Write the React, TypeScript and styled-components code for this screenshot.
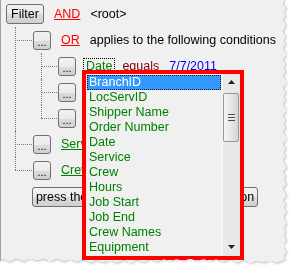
import React from 'react';
import styled, { createGlobalStyle } from 'styled-components';

const fields = [
  'BranchID',
  'LocServID',
  'Shipper Name',
  'Order Number',
  'Date',
  'Service',
  'Crew',
  'Hours',
  'Job Start',
  'Job End',
  'Crew Names',
  'Equipment',
];

// jagged "torn paper" outline of the screenshot
const tornEdge = (() => {
  const pts: string[] = ['0px 0px'];
  for (let y = 0; y <= 261; y += 4) {
    const x = 285 + Math.round(Math.sin(y * 0.9) * 1.5 + Math.sin(y * 2.7));
    pts.push(`${x}px ${y}px`);
  }
  for (let x = 284; x >= 0; x -= 4) {
    const y = 261 + Math.round(Math.sin(x * 1.1) * 1.5 + Math.sin(x * 3.1));
    pts.push(`${x}px ${y}px`);
  }
  return `polygon(${pts.join(', ')})`;
})();

const App: React.FC = () => {
  return (
    <>
      <GlobalStyle />
      <Frame>
        <Panel>
          <Row $pad={5}>
            <Btn $w={38} $h={20}>Filter</Btn>
            <Token $color="#ff0000" $link>AND</Token>
            <Token>&lt;root&gt;</Token>
          </Row>

          <Children $indent={14}>
            <Child $reach={18}>
              <Row>
                <Btn $w={18} $h={19} $dots>...</Btn>
                <Token $color="#ff0000" $link>OR</Token>
                <Token>applies to the following conditions</Token>
              </Row>

              <Children $indent={8}>
                <Child $reach={17}>
                  <Row>
                    <Btn $w={18} $h={19} $dots>...</Btn>
                    <Anchor>
                      <Token $color="#008000" $link $focus>Date</Token>
                      <ListBox>
                        <Items>
                          {fields.map((f, i) => (
                            <Item key={f} $selected={i === 0}>{f}</Item>
                          ))}
                        </Items>
                        <ScrollBar>
                          <Arrow>
                            <svg width="7" height="4" viewBox="0 0 7 4"><polygon points="3.5,0 7,4 0,4" fill="#222" /></svg>
                          </Arrow>
                          <Thumb><Grip /></Thumb>
                          <Track />
                          <Arrow>
                            <svg width="7" height="4" viewBox="0 0 7 4"><polygon points="0,0 7,0 3.5,4" fill="#222" /></svg>
                          </Arrow>
                        </ScrollBar>
                      </ListBox>
                    </Anchor>
                    <Token $color="#800000" $link>equals</Token>
                    <Token $color="#0000ff" $link>7/7/2011</Token>
                  </Row>
                </Child>
                <Child $reach={17}>
                  <Row>
                    <Btn $w={18} $h={19} $dots>...</Btn>
                  </Row>
                </Child>
                <Child $reach={17}>
                  <Row>
                    <Btn $w={18} $h={19} $dots>...</Btn>
                  </Row>
                </Child>
              </Children>
            </Child>

            <Child $reach={18}>
              <Row>
                <Btn $w={18} $h={19} $dots>...</Btn>
                <Token $color="#008000" $link>Service</Token>
              </Row>
            </Child>
            <Child $reach={18}>
              <Row>
                <Btn $w={18} $h={19} $dots>...</Btn>
                <Token $color="#008000" $link>Crew</Token>
              </Row>
            </Child>
          </Children>

          <AddButton>press the button to add a new condition</AddButton>
        </Panel>
      </Frame>
    </>
  );
};

const GlobalStyle = createGlobalStyle`
  body {
    margin: 0;
    background: #ffffff;
    font-family: "Liberation Sans", Arial, sans-serif;
    font-size: 12.5px;
    color: #000000;
  }
`;

const Frame = styled.div`
  width: 290px;
  height: 267px;
  filter: drop-shadow(0 0 0.6px #6a6a6a) drop-shadow(1px 1px 1px rgba(0, 0, 0, 0.15));
`;

const Panel = styled.div`
  width: 290px;
  height: 267px;
  box-sizing: border-box;
  padding-top: 1px;
  background: #f0f0f0;
  border-left: 1px solid #a0a0a0;
  clip-path: ${tornEdge};
`;

const Row = styled.div<{ $pad?: number }>`
  display: flex;
  align-items: center;
  height: 26px;
  padding-left: ${({ $pad }) => $pad || 0}px;
  white-space: nowrap;
`;

const Btn = styled.button<{ $w: number; $h: number; $dots?: boolean }>`
  width: ${({ $w }) => $w}px;
  height: ${({ $h }) => $h}px;
  flex: none;
  padding: 0;
  margin: 0;
  box-sizing: border-box;
  border: 1px solid #707070;
  border-radius: 3px;
  background: linear-gradient(#f2f2f2 0%, #ebebeb 50%, #dddddd 51%, #cfcfcf 100%);
  font-family: "Liberation Sans", Arial, sans-serif;
  font-size: ${({ $dots }) => ($dots ? '11px' : '12.5px')};
  line-height: ${({ $dots }) => ($dots ? '21px' : '17px')};
  color: #000000;
`;

const Token = styled.span<{ $color?: string; $link?: boolean; $focus?: boolean }>`
  margin-left: 4px;
  padding: 0 2px;
  line-height: 15px;
  color: ${({ $color }) => $color || '#000000'};
  text-decoration: ${({ $link }) => ($link ? 'underline' : 'none')};
  border: 1px dotted ${({ $focus }) => ($focus ? '#000000' : 'transparent')};

  button + & {
    margin-left: 7px;
  }
`;

const Anchor = styled.span`
  position: relative;
  display: flex;
  margin-left: 7px;

  & > ${Token} {
    margin-left: 0;
  }
`;

const Children = styled.div<{ $indent: number }>`
  margin-left: ${({ $indent }) => $indent}px;
`;

const Child = styled.div<{ $reach: number }>`
  position: relative;
  padding-left: ${({ $reach }) => $reach}px;

  &::before {
    content: '';
    position: absolute;
    left: 0;
    top: 0;
    bottom: 0;
    border-left: 1px dotted #7a7a7a;
  }

  &:last-child::before {
    bottom: auto;
    height: 13px;
  }

  &::after {
    content: '';
    position: absolute;
    left: 0;
    top: 13px;
    width: ${({ $reach }) => $reach - 1}px;
    border-top: 1px dotted #7a7a7a;
  }
`;

const ListBox = styled.div`
  position: absolute;
  left: -1px;
  top: 12px;
  z-index: 10;
  width: 162px;
  height: 190px;
  box-sizing: border-box;
  border: 4px solid #ff0000;
  background: #f0f0f0;
  display: flex;
`;

const Items = styled.div`
  flex: 1;
  display: flex;
  flex-direction: column;
  padding: 1px 1px 0 1px;
`;

const Item = styled.div<{ $selected?: boolean }>`
  height: 15px;
  box-sizing: border-box;
  line-height: 13px;
  padding-left: 1px;
  border: 1px ${({ $selected }) => ($selected ? 'dotted #1a1a1a' : 'solid transparent')};
  background: ${({ $selected }) => ($selected ? '#3399ff' : 'transparent')};
  color: ${({ $selected }) => ($selected ? '#ffffff' : '#008000')};
`;

const ScrollBar = styled.div`
  width: 17px;
  display: flex;
  flex-direction: column;
  background: #e9e9e9;
  border-left: 1px solid #f6f6f6;
`;

const Arrow = styled.div`
  height: 17px;
  display: flex;
  align-items: center;
  justify-content: center;
`;

const Thumb = styled.div`
  height: 49px;
  margin: 2px 1px 0 0;
  box-sizing: border-box;
  border: 1px solid #979797;
  border-radius: 2px;
  background: linear-gradient(to right, #f6f6f6, #e6e6e6 50%, #d6d6d6);
  display: flex;
  align-items: center;
  justify-content: center;
`;

const Grip = styled.span`
  width: 7px;
  height: 7px;
  background: repeating-linear-gradient(#4a4a4a 0 1px, #f2f2f2 1px 2px, transparent 2px 3px);
`;

const Track = styled.div`
  flex: 1;
`;

const AddButton = styled.button`
  display: block;
  width: 226px;
  height: 20px;
  margin: 4px 0 0 31px;
  padding: 0;
  box-sizing: border-box;
  border: 1px solid #707070;
  border-radius: 3px;
  background: linear-gradient(#f2f2f2 0%, #ebebeb 50%, #dddddd 51%, #cfcfcf 100%);
  font-family: "Liberation Sans", Arial, sans-serif;
  font-size: 12.5px;
  color: #000000;
  white-space: nowrap;
`;

export default App;
